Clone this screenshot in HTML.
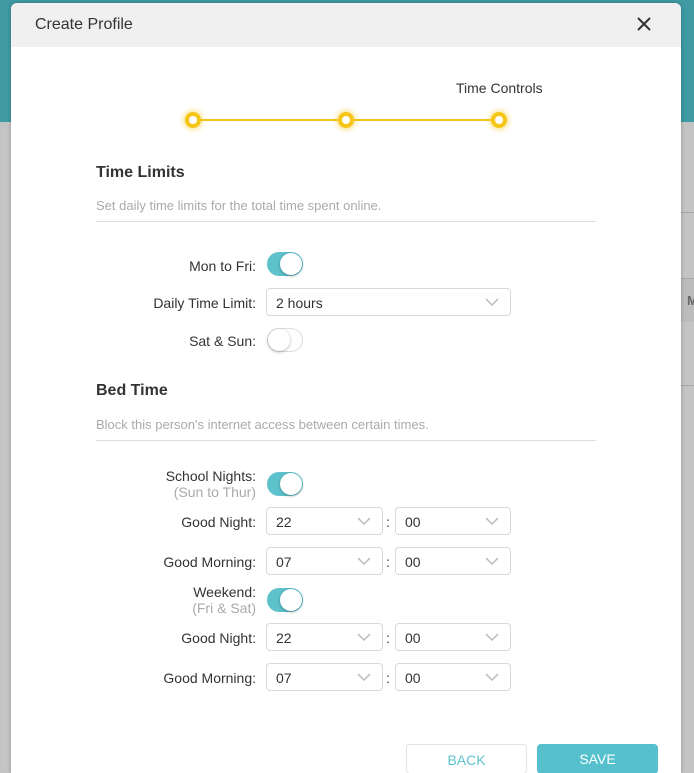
<!DOCTYPE html>
<html style="width:694px;height:773px;overflow:hidden"><head><meta charset="utf-8"><style>
*{box-sizing:border-box;margin:0;padding:0}
body{width:694px;height:773px;overflow:hidden;font-family:"Liberation Sans",sans-serif;background:#c4c4c4;position:relative}
.teal{position:absolute;left:0;top:0;width:694px;height:122px;background:#3f9aa3}
.hl{position:absolute;left:681px;width:13px;height:1px;background:#a9a9a9}
.modal{position:absolute;left:11px;top:3px;width:670px;height:770px;background:#fff;border-radius:6px 6px 0 0;overflow:hidden;box-shadow:0 0 4px rgba(0,0,0,.25)}
.hdr{height:44px;background:#f0f0f0;position:relative}
.hdr .t{position:absolute;left:24px;top:13px;font-size:16px;color:#333}
.x{position:absolute;left:626px;top:14px}
.a{position:absolute}
.lbl{position:absolute;right:425px;font-size:14px;color:#333;text-align:right;white-space:nowrap}
.sub{color:#aaa}
.tg{position:absolute;left:256px;width:36px;height:24px;border-radius:12px;background:#5ec2cc}
.tg::after{content:"";position:absolute;right:1px;top:1px;width:22px;height:22px;border-radius:50%;background:#fff;box-shadow:0 1px 3px rgba(0,0,0,.3)}
.tg.off{background:#fff;border:1px solid #ddd}
.tg.off::after{left:0;right:auto;top:0}
.sel{position:absolute;height:28px;border:1px solid #d9d9d9;border-radius:4px;font-size:14px;color:#333;padding:6px 0 0 9px}
.sel svg{position:absolute;right:11px;top:9px}
.h{position:absolute;left:85px;font-size:16px;font-weight:bold;color:#333}
.d{position:absolute;left:85px;font-size:13px;color:#aaa}
.line{position:absolute;left:85px;width:500px;height:1px;background:#ddd}
.colon{position:absolute;left:375px;font-size:14px;color:#333}
.dot{position:absolute;width:16px;height:16px;border-radius:50%;border:4px solid #f5c518;background:#fff;box-shadow:0 0 5px 2px rgba(245,197,24,.45)}
.btn{position:absolute;top:741px;width:121px;height:30px;border-radius:4px;font-size:14px;text-align:center;padding-top:7px}
</style></head><body>
<div class="teal"></div>
<div class="hl" style="top:212px"></div>
<div style="position:absolute;left:681px;top:279px;width:13px;height:43px;background:#bcbcbc"></div>
<div class="hl" style="top:278px"></div>
<div style="position:absolute;left:687px;top:293px;font-size:13px;font-weight:bold;color:#666">M</div>
<div class="hl" style="top:385px"></div>
<div class="modal">
<div class="hdr"><div class="t">Create Profile</div>
<svg class="x" width="14" height="14" viewBox="0 0 14 14"><path d="M1 1L13 13M13 1L1 13" stroke="#333" stroke-width="2"/></svg></div>
<div class="a" style="left:445px;top:77px;font-size:14px;color:#333">Time Controls</div>
<div class="a" style="left:182px;top:116px;width:306px;height:2px;background:#f5c518"></div>
<div class="dot" style="left:174px;top:109px"></div>
<div class="dot" style="left:327px;top:109px"></div>
<div class="dot" style="left:480px;top:109px"></div>

<div class="h" style="top:161px">Time Limits</div>
<div class="d" style="top:195px">Set daily time limits for the total time spent online.</div>
<div class="line" style="top:218px"></div>

<div class="lbl" style="top:255px">Mon to Fri:</div>
<div class="tg" style="top:249px"></div>
<div class="lbl" style="top:292px">Daily Time Limit:</div>
<div class="sel" style="left:255px;top:285px;width:245px">2 hours<svg width="14" height="8" viewBox="0 0 14 8"><path d="M1 1L7 7L13 1" stroke="#bbb" stroke-width="1.5" fill="none"/></svg></div>
<div class="lbl" style="top:330px">Sat &amp; Sun:</div>
<div class="tg off" style="top:325px"></div>

<div class="h" style="top:379px">Bed Time</div>
<div class="d" style="top:414px">Block this person's internet access between certain times.</div>
<div class="line" style="top:437px"></div>

<div class="lbl" style="top:465px;line-height:16px">School Nights:<br><span class="sub">(Sun to Thur)</span></div>
<div class="tg" style="top:469px"></div>
<div class="lbl" style="top:511px">Good Night:</div>
<div class="sel" style="left:255px;top:504px;width:117px">22<svg width="14" height="8" viewBox="0 0 14 8"><path d="M1 1L7 7L13 1" stroke="#bbb" stroke-width="1.5" fill="none"/></svg></div>
<div class="colon" style="top:511px">:</div>
<div class="sel" style="left:384px;top:504px;width:116px">00<svg width="14" height="8" viewBox="0 0 14 8"><path d="M1 1L7 7L13 1" stroke="#bbb" stroke-width="1.5" fill="none"/></svg></div>
<div class="lbl" style="top:551px">Good Morning:</div>
<div class="sel" style="left:255px;top:544px;width:117px">07<svg width="14" height="8" viewBox="0 0 14 8"><path d="M1 1L7 7L13 1" stroke="#bbb" stroke-width="1.5" fill="none"/></svg></div>
<div class="colon" style="top:551px">:</div>
<div class="sel" style="left:384px;top:544px;width:116px">00<svg width="14" height="8" viewBox="0 0 14 8"><path d="M1 1L7 7L13 1" stroke="#bbb" stroke-width="1.5" fill="none"/></svg></div>

<div class="lbl" style="top:581px;line-height:16px">Weekend:<br><span class="sub">(Fri &amp; Sat)</span></div>
<div class="tg" style="top:585px"></div>
<div class="lbl" style="top:627px">Good Night:</div>
<div class="sel" style="left:255px;top:620px;width:117px">22<svg width="14" height="8" viewBox="0 0 14 8"><path d="M1 1L7 7L13 1" stroke="#bbb" stroke-width="1.5" fill="none"/></svg></div>
<div class="colon" style="top:627px">:</div>
<div class="sel" style="left:384px;top:620px;width:116px">00<svg width="14" height="8" viewBox="0 0 14 8"><path d="M1 1L7 7L13 1" stroke="#bbb" stroke-width="1.5" fill="none"/></svg></div>
<div class="lbl" style="top:667px">Good Morning:</div>
<div class="sel" style="left:255px;top:660px;width:117px">07<svg width="14" height="8" viewBox="0 0 14 8"><path d="M1 1L7 7L13 1" stroke="#bbb" stroke-width="1.5" fill="none"/></svg></div>
<div class="colon" style="top:667px">:</div>
<div class="sel" style="left:384px;top:660px;width:116px">00<svg width="14" height="8" viewBox="0 0 14 8"><path d="M1 1L7 7L13 1" stroke="#bbb" stroke-width="1.5" fill="none"/></svg></div>

<div class="btn" style="left:395px;border:1px solid #e3e3e3;color:#5ec2cc;background:#fff">BACK</div>
<div class="btn" style="left:526px;background:#56c0cd;color:#fff">SAVE</div>
</div>
</body></html>
